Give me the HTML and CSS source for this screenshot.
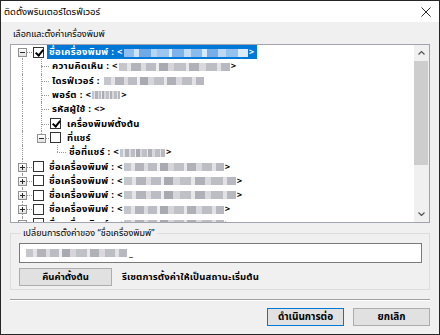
FILE: index.html
```html
<!DOCTYPE html>
<html lang="th">
<head>
<meta charset="utf-8">
<title>ติดตั้งพรินเตอร์ไดรฟ์เวอร์</title>
<link rel="stylesheet" href="styles.css">
</head>
<body>
<div class="window">
  <div class="titlebar">
    <span class="title">ติดตั้งพรินเตอร์ไดรฟ์เวอร์</span>
    <svg class="close" viewBox="0 0 11 11"><path d="M0.5 0.5L10.5 10.5M10.5 0.5L0.5 10.5" stroke="#111" stroke-width="1" fill="none"/></svg>
  </div>
  <div class="content">
    <div class="label">เลือกและตั้งค่าเครื่องพิมพ์</div>
    <div class="tree">
      <div class="items">
        <div class="row">
          <span class="cell c0 first"><span class="exp minus"></span></span>
          <span class="chk on"></span>
          <span class="txt sel">ชื่อเครื่องพิมพ์ : &lt;<span class="mosaic blue w124"></span>&gt;</span>
        </div>
        <div class="row">
          <span class="cell c0 v"></span><span class="cell c1 t"></span>
          <span class="txt">ความคิดเห็น : &lt;<span class="mosaic w111"></span>&gt;</span>
        </div>
        <div class="row">
          <span class="cell c0 v"></span><span class="cell c1 t"></span>
          <span class="txt">ไดรฟ์เวอร์ : <span class="mosaic w100"></span></span>
        </div>
        <div class="row">
          <span class="cell c0 v"></span><span class="cell c1 t"></span>
          <span class="txt">พอร์ต : &lt;<span class="mosaic w28"></span>&gt;</span>
        </div>
        <div class="row">
          <span class="cell c0 v"></span><span class="cell c1 t"></span>
          <span class="txt">รหัสผู้ใช้ : &lt;&gt;</span>
        </div>
        <div class="row">
          <span class="cell c0 v"></span><span class="cell c1 t"></span>
          <span class="chk on"></span>
          <span class="txt">เครื่องพิมพ์ตั้งต้น</span>
        </div>
        <div class="row">
          <span class="cell c0 v"></span><span class="cell c1 l"><span class="exp minus"></span></span>
          <span class="chk"></span>
          <span class="txt">ที่แชร์</span>
        </div>
        <div class="row">
          <span class="cell c0 v"></span><span class="cell c1"></span><span class="cell c2 l"></span>
          <span class="txt">ชื่อที่แชร์ : &lt;<span class="mosaic w45"></span>&gt;</span>
        </div>
        <div class="row">
          <span class="cell c0 t"><span class="exp plus"></span></span>
          <span class="chk"></span>
          <span class="txt">ชื่อเครื่องพิมพ์ : &lt;<span class="mosaic w100"></span>&gt;</span>
        </div>
        <div class="row">
          <span class="cell c0 t"><span class="exp plus"></span></span>
          <span class="chk"></span>
          <span class="txt">ชื่อเครื่องพิมพ์ : &lt;<span class="mosaic w112"></span>&gt;</span>
        </div>
        <div class="row">
          <span class="cell c0 t"><span class="exp plus"></span></span>
          <span class="chk"></span>
          <span class="txt">ชื่อเครื่องพิมพ์ : &lt;<span class="mosaic w112"></span>&gt;</span>
        </div>
        <div class="row">
          <span class="cell c0 t"><span class="exp plus"></span></span>
          <span class="chk"></span>
          <span class="txt">ชื่อเครื่องพิมพ์ : &lt;<span class="mosaic w100"></span>&gt;</span>
        </div>
        <div class="row">
          <span class="cell c0 t"><span class="exp plus"></span></span>
          <span class="chk"></span>
          <span class="txt">ชื่อเครื่องพิมพ์ : &lt;<span class="mosaic w100"></span>&gt;</span>
        </div>
      </div>
      <div class="scroll">
        <div class="sb-btn"><svg viewBox="0 0 7 4" class="chev"><polyline points="0.5,3.5 3.5,0.5 6.5,3.5" fill="none" stroke="#555" stroke-width="1.2"/></svg></div>
        <div class="thumb"></div>
        <div class="track"></div>
        <div class="sb-btn"><svg viewBox="0 0 7 4" class="chev"><polyline points="0.5,0.5 3.5,3.5 6.5,0.5" fill="none" stroke="#555" stroke-width="1.2"/></svg></div>
      </div>
    </div>
    <fieldset class="group">
      <legend>เปลี่ยนการตั้งค่าของ “ชื่อเครื่องพิมพ์”</legend>
      <div class="input"><span class="mosaic w101"></span><span class="caret">_</span></div>
      <div class="reset-row">
        <button class="btn reset">คืนค่าตั้งต้น</button>
        <span class="reset-text">รีเซตการตั้งค่าให้เป็นสถานะเริ่มต้น</span>
      </div>
    </fieldset>
    <div class="sep"></div>
    <div class="buttons">
      <button class="btn primary">ดำเนินการต่อ</button>
      <button class="btn">ยกเลิก</button>
    </div>
  </div>
</div>
</body>
</html>
```
FILE: styles.css
```css
* { box-sizing: border-box; }
html, body { margin: 0; padding: 0; }
body {
  width: 440px; height: 335px; overflow: hidden;
  font-family: Tahoma, "Noto Sans Thai", "Leelawadee UI", "Noto Sans", "DejaVu Sans", sans-serif;
  font-size: 9px; color: #000;
}
.window {
  width: 440px; height: 335px;
  border: 1px solid #262626;
  background: #f0f0f0;
  display: flex; flex-direction: column;
}
.titlebar {
  height: 21px; flex: none;
  background: #fff;
  display: flex; align-items: center; justify-content: space-between;
  padding: 0 8px 0 3px;
}
.title { font-size: 9.5px; }
.close { width: 10px; height: 10px; }
.content {
  flex: 1;
  padding: 5px 9px 0 9px;
  display: flex; flex-direction: column;
}
.label { height: 14px; line-height: 14px; padding-left: 3px; margin-bottom: 3px; }

.tree {
  height: 179px; flex: none;
  border: 1px solid #a3a3ad;
  background: #fff;
  display: flex;
}
.items { flex: 1; overflow: hidden; }
.row {
  height: 14.3px;
  display: flex; align-items: center;
  white-space: nowrap;
}
.cell { position: relative; height: 100%; flex: none; }
.c0 { width: 22px; --lx: 11px; }
.c1 { width: 17px; --lx: 8px; }
.c2 { width: 17px; --lx: 7px; }
.cell.v::before, .cell.t::before, .cell.l::before, .cell.first::before {
  content: ""; position: absolute; left: var(--lx);
  top: 0; bottom: 0;
  border-left: 1px dotted #9a9a9a;
}
.cell.l::before { bottom: 50%; }
.cell.first::before { top: 50%; }
.cell.t::after, .cell.l::after, .cell.first::after {
  content: ""; position: absolute; left: var(--lx); right: 1px;
  top: 50%;
  border-top: 1px dotted #9a9a9a;
}
.exp {
  position: absolute; z-index: 1;
  left: calc(var(--lx) - 4px); top: 50%;
  width: 9px; height: 9px; margin-top: -4px;
  border: 1px solid #919191;
  background: linear-gradient(#fff, #e2e2e2);
}
.exp::before {
  content: ""; position: absolute; left: 1px; right: 1px; top: 3px; height: 1px;
  background: #2a2a2a;
}
.exp.plus::after {
  content: ""; position: absolute; top: 1px; bottom: 1px; left: 3px; width: 1px;
  background: #2a2a2a;
}
.chk {
  flex: none;
  width: 11px; height: 11px;
  border: 1px solid #333;
  background: #fff;
  margin-right: 3px;
  position: relative;
}
.chk.on::after {
  content: ""; position: absolute;
  left: 3px; top: 0px; width: 3px; height: 6px;
  border: solid #000; border-width: 0 2px 2px 0;
  transform: rotate(40deg);
}
.row > .cell.c1 + .chk, .row > .cell.c2 + .chk { margin-right: 4px; }
.txt { line-height: 14px; padding: 0 2px; font-weight: bold; font-size: 9.5px; letter-spacing: 0.3px; }
.txt.sel { background: #0078d7; color: #fff; }
.mosaic {
  display: inline-block; height: 8px; vertical-align: middle; margin: 0 1px;
  background:
    linear-gradient(90deg, #c5c5cc 0 7%, #e4e4e8 7% 11%, #b3b3bb 11% 20%, #dcdce0 20% 24%, #bcbcc4 24% 33%, #eeeef0 33% 36%, #a9a9b2 36% 44%, #d6d6da 44% 50%, #c0c0c7 50% 60%, #e8e8ea 60% 63%, #b0b0b9 63% 72%, #d9d9dd 72% 78%, #bdbdc4 78% 88%, #e2e2e6 88% 92%, #b8b8c0 92% 100%);
  filter: blur(0.5px);
}
.mosaic.blue {
  background:
    linear-gradient(90deg, #8fbff0 0 8%, #cfe3f8 8% 12%, #6eaae6 12% 22%, #b6d5f4 22% 27%, #9ac6f0 27% 36%, #e0edfa 36% 39%, #7db3ea 39% 48%, #c4dcf6 48% 54%, #88bbee 54% 63%, #d6e8f9 63% 67%, #75aee8 67% 76%, #bcd8f5 76% 82%, #93c2ef 82% 92%, #dceafa 92% 100%);
}
.w28 { width: 28px; } .w45 { width: 45px; } .w100 { width: 100px; }
.w101 { width: 101px; } .w111 { width: 111px; } .w112 { width: 112px; } .w124 { width: 124px; }

.scroll { width: 15px; flex: none; background: #f0f0f0; display: flex; flex-direction: column; }
.sb-btn { height: 16px; flex: none; display: flex; align-items: center; justify-content: center; }
.chev { width: 7px; height: 4px; }
.thumb { height: 104px; flex: none; background: #cdcdcd; margin: 0 1px 0 0; }
.track { flex: 1; }

.group {
  margin: 3px 0 0; min-width: 0;
  padding: 3px 7px 3px 8px;
  border: 1px solid #dcdcdc;
}
.group legend { padding: 0 2px; margin-left: 2px; line-height: 14px; }
.input {
  height: 20px; border: 1px solid #7a7a7a; background: #fff;
  display: flex; align-items: center; padding-left: 5px;
  margin-bottom: 5px;
}
.caret { margin-left: 1px; line-height: 10px; }
.reset-row { display: flex; align-items: center; gap: 10px; }
.reset-text { font-weight: bold; font-size: 9.5px; letter-spacing: 0.15px; }
.btn {
  font: inherit; color: #000; font-weight: bold; font-size: 9.5px;
  height: 18px; padding: 0;
  border: 1px solid #adadad;
  background: #e1e1e1;
}
.reset { width: 93px; }
.sep { margin-top: 9px; height: 2px; border-top: 1px solid #a0a0a0; border-bottom: 1px solid #fff; }
.buttons { margin-top: 7px; display: flex; justify-content: flex-end; gap: 9px; }
.buttons .btn { width: 77px; font-size: 10px; }
.btn.primary { border-color: #0078d7; }
```
